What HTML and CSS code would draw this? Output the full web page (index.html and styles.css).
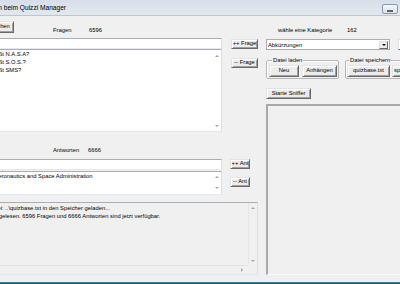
FILE: index.html
```html
<!DOCTYPE html>
<html lang="de">
<head>
    <meta charset="UTF-8">
    <meta name="viewport" content="width=device-width, initial-scale=1.0">
    <title>Quizzi Manager</title>
    <link rel="stylesheet" href="styles.css">
</head>
<body>
    <div class="window">
        <div class="titlebar">
            <span class="title">Willkommen beim Quizzi Manager</span>
            <span class="min-btn"><i></i></span>
        </div>

        <div class="client">
            <div class="left">
                <div class="head-row">
                    <button class="btn btn-search">Suchen</button>
                    <span class="count-lbl">Fragen</span>
                    <span class="count-num">6596</span>
                </div>

                <div class="edit-row">
                    <div class="edit-col">
                        <div class="textbox"></div>
                        <div class="memo memo-q">
                            <div class="memo-text memo-text-q">
                                <div>Was heißt N.A.S.A?</div>
                                <div>Was heißt S.O.S.?</div>
                                <div>Was heißt SMS?</div>
                            </div>
                            <div class="memo-scroll scroll-q"><i class="arr arr-up"></i><i class="arr arr-down"></i></div>
                        </div>
                    </div>
                    <div class="side-col">
                        <button class="btn side-btn btn-plus-q">++ Frage</button>
                        <button class="btn side-btn btn-minus-q">-- Frage</button>
                    </div>
                </div>

                <div class="head-row head-ant">
                    <span class="count-lbl count-lbl-ant">Antworten</span>
                    <span class="count-num">6666</span>
                </div>

                <div class="edit-row">
                    <div class="edit-col">
                        <div class="textbox"></div>
                        <div class="memo memo-a">
                            <div class="memo-text memo-text-a">
                                <div>National Aeronautics and Space Administration</div>
                            </div>
                            <div class="memo-scroll scroll-a"><i class="arr arr-up"></i><i class="arr arr-down"></i></div>
                        </div>
                    </div>
                    <div class="side-col side-col-ant">
                        <button class="btn side-btn btn-plus-a">++ Ant</button>
                        <button class="btn side-btn btn-minus-a">-- Ant</button>
                    </div>
                </div>

                <div class="log">
                    <div class="log-main">
                        <div class="log-text">
                            <div>Lade Datei: ..\quizbase.txt in den Speicher geladen...</div>
                            <div>Daten eingelesen. 6596 Fragen und 6666 Antworten sind jetzt verfügbar.</div>
                        </div>
                        <div class="vscroll"><i class="arr arr-up"></i><i class="arr arr-down"></i></div>
                    </div>
                    <div class="log-bottom">
                        <div class="hscroll"><i class="arr arr-right"></i></div>
                        <div class="corner"></div>
                    </div>
                </div>
            </div>

            <div class="right">
                <div class="cat-row">
                    <span class="cat-lbl">wähle eine Kategorie</span>
                    <span>162</span>
                </div>

                <div class="combo-row">
                    <div class="combo">
                        <span>Abkürzungen</span>
                        <span class="combo-arrow"><i class="arr arr-down arr-dark"></i></span>
                    </div>
                    <span class="btn cut-box"></span>
                </div>

                <div class="group-row">
                    <fieldset class="group group-load">
                        <legend>Datei laden</legend>
                        <div class="group-btns">
                            <button class="btn btn-new">Neu</button>
                            <button class="btn btn-append">Anhängen</button>
                        </div>
                    </fieldset>
                    <fieldset class="group group-save">
                        <legend>Datei speichern</legend>
                        <div class="group-btns">
                            <button class="btn btn-save">quizbase.txt</button>
                            <button class="btn btn-save-as">speichern unter</button>
                        </div>
                    </fieldset>
                </div>

                <button class="btn btn-sniffer">Starte Sniffer</button>

                <div class="sniffer-panel"></div>
            </div>
        </div>

        <div class="taskbar"></div>
    </div>
</body>
</html>
```

FILE: styles.css
```css
:root {
    --face: #f0f0f0;
    --light: #ffffff;
    --shadow: #a0a0a0;
    --dark: #696969;
    --edit-border: #abadb3;
    --arrow: #a6a6a6;
}

* {
    margin: 0;
    padding: 0;
    box-sizing: border-box;
}

html, body {
    width: 400px;
    height: 284px;
    overflow: hidden;
}

body {
    background-color: var(--face);
    color: #000;
    font-family: "Liberation Sans", Arial, sans-serif;
    font-size: 5.8px;
}

.window {
    width: 430px;
    height: 284px;
    margin-left: -30px;
    display: flex;
    flex-direction: column;
}

/* title bar */
.titlebar {
    height: 16px;
    flex: none;
    display: flex;
    align-items: center;
    justify-content: space-between;
    background: linear-gradient(#d6dfe9, #e1e8ef);
    border-bottom: 1px solid #bcc6d1;
}

.title {
    font-size: 6.6px;
    margin-left: -4px;
    white-space: nowrap;
}

.min-btn {
    width: 16px;
    height: 10px;
    margin: 2px 2px 0 0;
    border: 1px solid #8a9aad;
    border-radius: 2px;
    background: linear-gradient(#f4f6f9, #dce3ea);
    display: flex;
    justify-content: center;
}

.min-btn i {
    width: 6px;
    height: 2px;
    margin-top: 5px;
    background-color: #51647a;
}

.client {
    flex: 1;
    display: flex;
    min-height: 0;
}

.taskbar {
    height: 2px;
    flex: none;
    background-color: #1f5b75;
    border-top: 1px solid #3f7d96;
}

/* classic 3d button */
.btn {
    font: inherit;
    color: #000;
    background-color: #ececec;
    border: 1px solid;
    border-color: #e3e3e3 var(--dark) var(--dark) #e3e3e3;
    box-shadow: inset 1px 1px var(--light), inset -1px -1px var(--shadow);
    display: flex;
    align-items: center;
    justify-content: center;
    line-height: 1;
    white-space: nowrap;
    flex: none;
}

/* left side */
.left {
    width: 296px;
    flex: none;
    display: flex;
    flex-direction: column;
}

.head-row {
    display: flex;
    align-items: flex-start;
    height: 22px;
    line-height: 8px;
}

.btn-search {
    width: 28px;
    height: 12px;
    margin: 5px 0 0 16px;
}

.count-lbl {
    width: 36px;
    margin: 10px 0 0 39px;
}

.count-num {
    margin-top: 10px;
}

.head-ant {
    height: 27px;
}

.count-lbl-ant {
    width: 35px;
    margin: 14px 0 0 83px;
}

.head-ant .count-num {
    margin-top: 14px;
}

.edit-row {
    display: flex;
}

.edit-col {
    width: 252px;
    flex: none;
    display: flex;
    flex-direction: column;
}

.textbox {
    height: 11px;
    background-color: #fff;
    border: 1px solid;
    border-color: var(--edit-border) #dbdfe6 #e3e9ef #e2e3ea;
}

.memo {
    display: flex;
    background-color: #fff;
    border: 1px solid;
    border-color: var(--edit-border) #dbdfe6 #e3e9ef #e2e3ea;
    line-height: 8px;
    white-space: nowrap;
    overflow: hidden;
}

.memo-q {
    height: 83px;
}

.memo-a {
    height: 24px;
    margin-top: 1px;
}

.memo-text {
    flex: 1;
}

.memo-text-q {
    padding-left: 7px;
}

.memo-text-a {
    padding-left: 1px;
}

.memo-scroll {
    width: 9px;
    display: flex;
    flex-direction: column;
    justify-content: space-between;
    align-items: center;
}

.scroll-q {
    padding: 5px 0 4px;
}

.scroll-a {
    padding: 4px 0 5px;
}

.arr {
    width: 0;
    height: 0;
    border: solid transparent;
}

.arr-up {
    border-width: 0 2px 2px;
    border-bottom-color: var(--arrow);
}

.arr-down {
    border-width: 2px 2px 0;
    border-top-color: var(--arrow);
}

.arr-right {
    border-width: 2px 0 2px 2px;
    border-left-color: var(--arrow);
}

.arr-dark {
    border-top-color: #000;
}

.side-col {
    display: flex;
    flex-direction: column;
    padding-left: 9px;
}

.side-btn {
    height: 10px;
}

.btn-plus-q, .btn-minus-q {
    width: 27px;
}

.btn-plus-q {
    margin-top: 1px;
}

.btn-minus-q {
    margin-top: 9px;
}

.side-col-ant {
    padding-left: 8px;
}

.btn-plus-a, .btn-minus-a {
    width: 20px;
}

.btn-minus-a {
    margin-top: 8px;
}

/* log box */
.log {
    width: 288px;
    height: 73px;
    margin-top: 7px;
    display: flex;
    flex-direction: column;
    border: 1px solid;
    border-color: var(--edit-border) #dbdfe6 #e3e9ef #e2e3ea;
    line-height: 8px;
    white-space: nowrap;
    overflow: hidden;
}

.log-main {
    flex: 1;
    display: flex;
}

.log-text {
    flex: 1;
    padding: 1px 0 0 3px;
    overflow: hidden;
}

.vscroll {
    width: 9px;
    display: flex;
    flex-direction: column;
    justify-content: space-between;
    align-items: center;
    padding: 4px 0 3px;
    border-left: 1px solid #e6e6e6;
}

.log-bottom {
    height: 9px;
    display: flex;
}

.hscroll {
    flex: 1;
    display: flex;
    align-items: center;
    justify-content: flex-end;
    padding-right: 5px;
    border-top: 1px solid #e3e3e3;
}

.corner {
    width: 9px;
}

/* right side */
.right {
    flex: none;
    width: 134px;
    display: flex;
    flex-direction: column;
}

.cat-row {
    display: flex;
    margin: 10px 0 5px 12px;
    line-height: 8px;
    white-space: nowrap;
}

.cat-lbl {
    width: 69px;
    flex: none;
}

.combo-row {
    display: flex;
    align-items: flex-start;
}

.combo {
    width: 124px;
    height: 11px;
    flex: none;
    display: flex;
    align-items: center;
    justify-content: space-between;
    padding: 0 1px;
    background-color: #fff;
    border: 1px solid var(--edit-border);
}

.combo-arrow {
    width: 9px;
    height: 8px;
    display: flex;
    align-items: center;
    justify-content: center;
    background-color: #ececec;
    border: 1px solid;
    border-color: #e3e3e3 var(--dark) var(--dark) #e3e3e3;
}

.cut-box {
    width: 20px;
    height: 11px;
    margin-left: 8px;
}

.group-row {
    display: flex;
    margin-top: 7px;
}

.group {
    min-width: 0;
    flex: none;
    border: 1px solid #b7b7b7;
    border-radius: 2px;
    box-shadow: inset 1px 1px #fff;
    padding: 2px 2px 1px;
}

.group legend {
    margin-left: 3px;
    padding: 0 1px;
    line-height: 6px;
    white-space: nowrap;
}

.group-load {
    width: 73px;
}

.group-save {
    width: 100px;
    margin-left: 6px;
    padding-left: 1px;
}

.group-save legend {
    margin-left: 2px;
}

.group-btns {
    display: flex;
    gap: 3px;
}

.group-btns .btn {
    height: 12px;
}

.btn-new {
    width: 30px;
}

.btn-append {
    width: 35px;
}

.btn-save {
    width: 43px;
}

.group-save .group-btns {
    gap: 2px;
}

.btn-save-as {
    width: 44px;
}

.btn-sniffer {
    width: 45px;
    height: 11px;
    margin-top: 9px;
}

.sniffer-panel {
    width: 160px;
    height: 171px;
    flex: none;
    margin-top: 5px;
    border-top: 2px solid #a9a9a9;
    border-left: 2px solid #a9a9a9;
    border-bottom: 1px solid #fafafa;
}
```
